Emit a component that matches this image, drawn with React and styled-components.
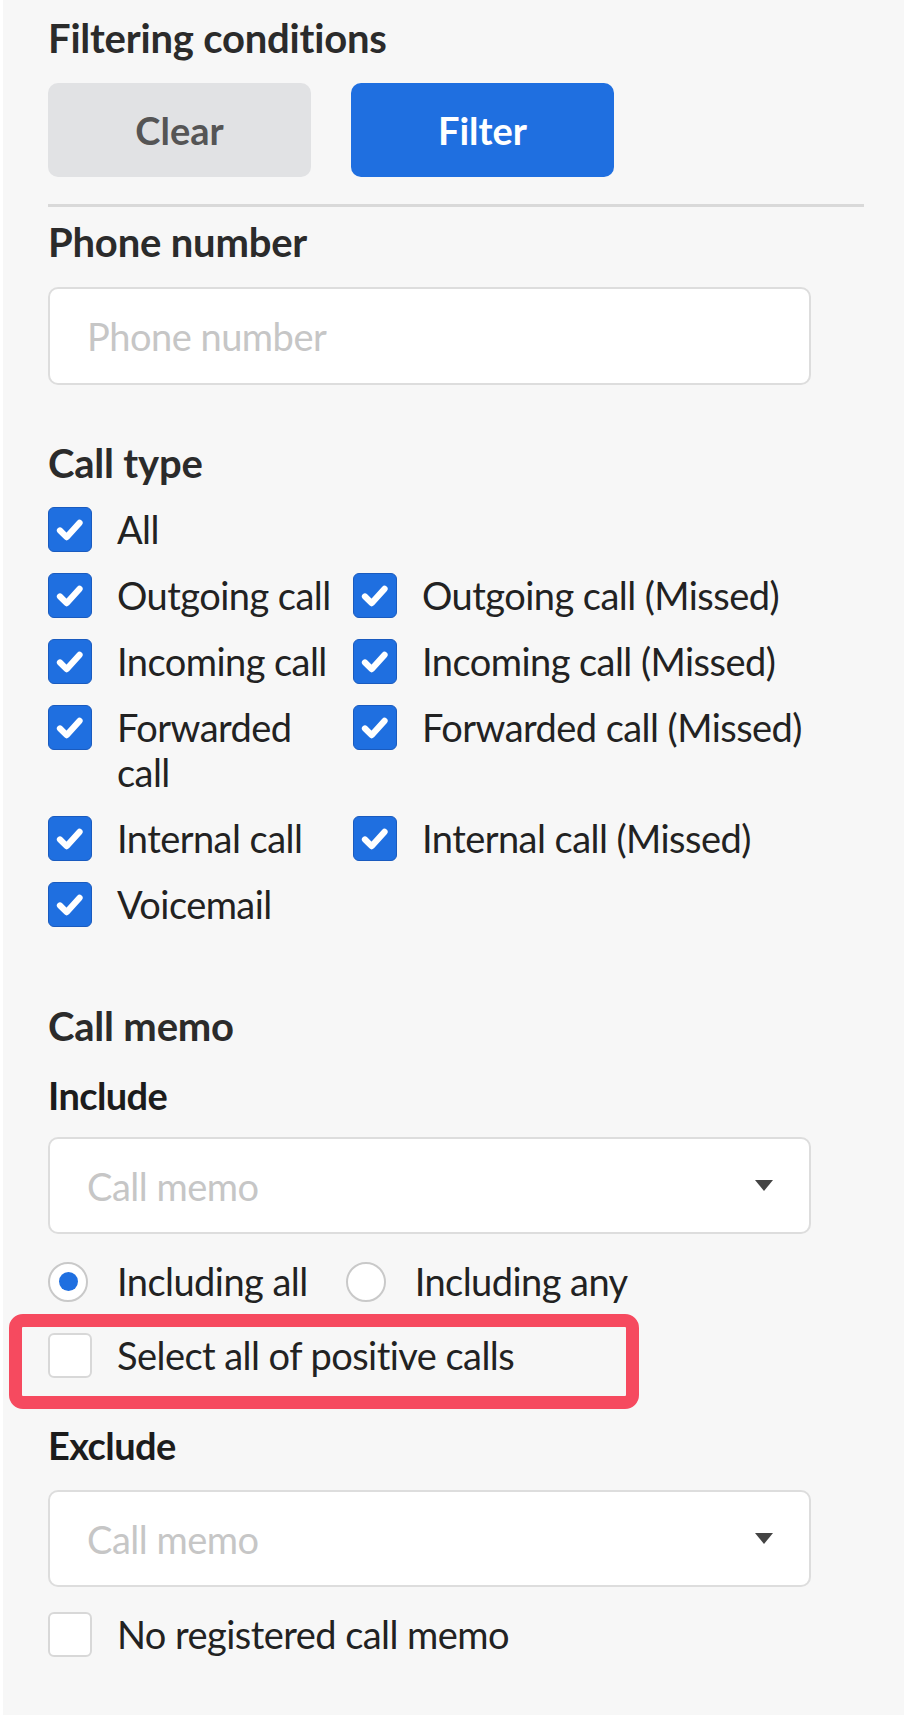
import React from "react";
import styled, { createGlobalStyle } from "styled-components";

const GlobalStyle = createGlobalStyle`
  html, body { margin: 0; padding: 0; background: #ffffff; }
  body { font-family: Lato, "Noto Sans", sans-serif; color: #222; }
  * { box-sizing: border-box; }
`;

const Panel = styled.div`
  margin-left: 3px;
  width: 901px;
  min-height: 1715px;
  background: #f7f7f7;
  padding: 15px 40px 0 45px;
  display: flex;
  flex-direction: column;
`;

const Title = styled.h1`
  margin: 0;
  font-size: 40px;
  line-height: 47px;
  font-weight: 700;
  letter-spacing: -0.2px;
  color: #2b2b2b;
`;

const ButtonRow = styled.div`
  display: flex;
  gap: 40px;
  margin-top: 21px;
`;

const Button = styled.button`
  width: 263px;
  height: 94px;
  border: none;
  border-radius: 10px;
  font-family: inherit;
  font-size: 38px;
  font-weight: 700;
  background: ${(p) => (p.$primary ? "#1f6fe0" : "#e1e2e4")};
  color: ${(p) => (p.$primary ? "#ffffff" : "#555555")};
`;

const Divider = styled.hr`
  margin: 27px 0 0 0;
  border: none;
  height: 3px;
  background: #d9d9d9;
`;

const Label = styled.div`
  margin-top: ${(p) => p.$mt}px;
  font-size: ${(p) => (p.$dark ? 38 : 40)}px;
  line-height: 47px;
  font-weight: 700;
  letter-spacing: ${(p) => (p.$dark ? "-0.6px" : "-0.2px")};
  color: ${(p) => (p.$dark ? "#1c1c1c" : "#2b2b2b")};
`;

const Field = styled.div`
  margin-top: ${(p) => p.$mt}px;
  width: 763px;
  height: ${(p) => p.$h}px;
  background: #ffffff;
  border: 2px solid #dddddd;
  border-radius: 10px;
  display: flex;
  align-items: center;
  justify-content: space-between;
  padding: 0 36px 0 37px;
`;

const Placeholder = styled.span`
  font-size: 38px;
  letter-spacing: -0.5px;
  color: #c6c6c6;
`;

const Caret = styled.span`
  width: 0;
  height: 0;
  border-left: 9.5px solid transparent;
  border-right: 9.5px solid transparent;
  border-top: 11px solid #444444;
`;

const CheckGrid = styled.div`
  margin-top: 20px;
  display: grid;
  grid-template-columns: 305px 1fr;
  row-gap: 21px;
`;

const Option = styled.label`
  display: flex;
  align-items: flex-start;
  gap: 25px;
  grid-column: ${(p) => (p.$full ? "1 / -1" : "auto")};
  margin-top: ${(p) => p.$mt || 0}px;
  position: relative;
`;

const OptionText = styled.span`
  font-size: 38px;
  line-height: 45px;
  letter-spacing: -0.55px;
  color: #222222;
  font-weight: 400;
`;

const Box = styled.span`
  flex: none;
  width: 44px;
  height: 45px;
  border-radius: 6px;
  display: flex;
  align-items: center;
  justify-content: center;
  background: ${(p) => (p.$checked ? "#1f6fe0" : "#ffffff")};
  border: ${(p) => (p.$checked ? "1.5px solid #1a5bbf" : "2px solid #d8d8d8")};
`;

const RadioRow = styled.div`
  margin-top: 25px;
  display: flex;
  align-items: center;
  gap: 38px;
`;

const RadioOption = styled.label`
  display: flex;
  align-items: center;
  gap: 29px;
`;

const RadioCircle = styled.span`
  flex: none;
  width: 40px;
  height: 40px;
  border-radius: 50%;
  background: #ffffff;
  border: 2px solid #c9c9c9;
  display: flex;
  align-items: center;
  justify-content: center;
  &::after {
    content: "";
    width: 19px;
    height: 19px;
    border-radius: 50%;
    background: ${(p) => (p.$on ? "#1f6fe0" : "transparent")};
  }
`;

const Highlight = styled.span`
  position: absolute;
  left: -39px;
  top: -19px;
  width: 630px;
  height: 95px;
  border: 13px solid #f64a5f;
  border-radius: 14px;
  pointer-events: none;
`;

const Check = () => (
  <svg width="44" height="44" viewBox="0 0 44 44" aria-hidden="true">
    <path
      d="M11.5 22.5 L18.5 29.5 L32 14.5"
      fill="none"
      stroke="#ffffff"
      strokeWidth="6.5"
      strokeLinecap="round"
      strokeLinejoin="round"
    />
  </svg>
);

const CheckOption = ({ label, checked = true, full, mt, children }) => (
  <Option $full={full} $mt={mt}>
    <Box $checked={checked}>{checked && <Check />}</Box>
    <OptionText>{label}</OptionText>
    {children}
  </Option>
);

const callTypes = [
  ["Outgoing call", "Outgoing call (Missed)"],
  ["Incoming call", "Incoming call (Missed)"],
  ["Forwarded call", "Forwarded call (Missed)"],
  ["Internal call", "Internal call (Missed)"],
];

export default function App() {
  return (
    <>
      <GlobalStyle />
      <Panel>
        <Title>Filtering conditions</Title>
        <ButtonRow>
          <Button>Clear</Button>
          <Button $primary>Filter</Button>
        </ButtonRow>
        <Divider />

        <Label $mt={12}>Phone number</Label>
        <Field $mt={21} $h={98}>
          <Placeholder>Phone number</Placeholder>
        </Field>

        <Label $mt={55}>Call type</Label>
        <CheckGrid>
          <CheckOption label="All" full />
          {callTypes.map(([a, b]) => (
            <React.Fragment key={a}>
              <CheckOption label={a} />
              <CheckOption label={b} />
            </React.Fragment>
          ))}
          <CheckOption label="Voicemail" />
        </CheckGrid>

        <Label $mt={76}>Call memo</Label>
        <Label $mt={22} $dark>Include</Label>
        <Field $mt={18} $h={97}>
          <Placeholder>Call memo</Placeholder>
          <Caret />
        </Field>
        <RadioRow>
          <RadioOption>
            <RadioCircle $on />
            <OptionText>Including all</OptionText>
          </RadioOption>
          <RadioOption>
            <RadioCircle />
            <OptionText>Including any</OptionText>
          </RadioOption>
        </RadioRow>
        <CheckOption label="Select all of positive calls" checked={false} mt={29}>
          <Highlight />
        </CheckOption>

        <Label $mt={44} $dark>Exclude</Label>
        <Field $mt={21} $h={97}>
          <Placeholder>Call memo</Placeholder>
          <Caret />
        </Field>
        <CheckOption label="No registered call memo" checked={false} mt={25} />
      </Panel>
    </>
  );
}
